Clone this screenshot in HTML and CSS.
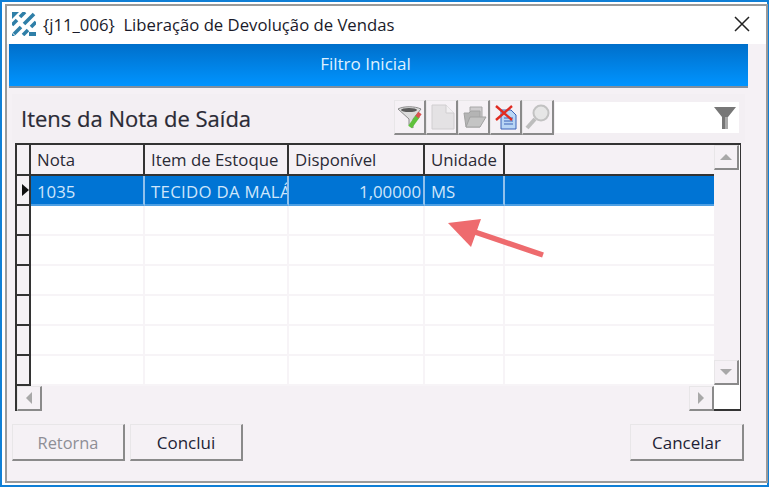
FILE: index.html
```html
<!doctype html>
<html lang="pt">
    <head>
        <meta charset="UTF-8" />
        <title>Liberação de Devolução de Vendas</title>
        <link rel="stylesheet" href="styles.css">
    </head>
    <body>
        <div class="screen">
            <div class="window">
                <div class="titlebar">
                    <svg class="app-logo" width="24" height="24" viewBox="0 0 24 24">
                        <path d="M0 0H7L0 7Z" fill="#2f7fa8" />
                        <path d="M0 13 5 8M8 5 13 0M2 22 9 15M12 12 22 2M11 23 16 18M19 15 24 10" stroke="#2f7fa8" stroke-width="3.600" fill="none" />
                        <path d="M17 24V20H24V24ZM0 24V21L3 24Z" fill="#2f7fa8" />
                    </svg>
                    <span class="titlebar__text">{j11_006}&nbsp; Liberação de Devolução de Vendas</span>
                    <svg class="close-icon" width="16" height="16" viewBox="0 0 16 16">
                        <path d="M1 1 15 15M15 1 1 15" stroke="#222" stroke-width="1.5" fill="none" />
                    </svg>
                </div>
                <div class="content">
                    <div class="band">Filtro Inicial</div>
                    <div class="panel">
                        <div class="panel__head">
                            <h1 class="panel__title">Itens da Nota de Saída</h1>
                            <div class="toolbar">
                                <button class="tool">
                                    <svg width="26" height="26" viewBox="0 0 26 26">
                                        <path d="M1 5C6 2 18 2 24 5L16 15V24L12 21V15Z" fill="#dcdcdc" stroke="#8a8a8a" />
                                        <ellipse cx="12" cy="6" rx="8" ry="2" fill="#5a5a5a" />
                                        <path d="M13 23 21 12" stroke="#5fc13c" stroke-width="4.500" />
                                        <path d="M20 13 23 9" stroke="#d9534f" stroke-width="4" />
                                    </svg>
                                </button>
                                <button class="tool">
                                    <svg width="26" height="26" viewBox="0 0 26 26">
                                        <path d="M3 1H17L25 9V25H3Z" fill="#e4e2e4" stroke="#d0ced0" />
                                        <path d="M17 1V9H25" fill="#f2f0f2" stroke="#d0ced0" />
                                    </svg>
                                </button>
                                <button class="tool">
                                    <svg width="26" height="26" viewBox="0 0 26 26">
                                        <path d="M9 3H21V14H9Z" fill="#cfcdcf" stroke="#a8a8a8" />
                                        <path d="M3 9H8L10 7H19V23H5Z" fill="#b4b4b4" stroke="#a2a2a2" />
                                        <path d="M5 23 9 13H25L19 23Z" fill="#c4c4c4" stroke="#a2a2a2" />
                                    </svg>
                                </button>
                                <button class="tool">
                                    <svg width="26" height="26" viewBox="0 0 26 26">
                                        <path d="M8 6H18L23 11V25H8Z" fill="#b9d6f5" stroke="#3a62b8" />
                                        <path d="M11 14H20M11 17H20M11 20H20" stroke="#3a62b8" />
                                        <path d="M3 2 19 16M19 2 3 16" stroke="#e02a20" stroke-width="2.400" />
                                    </svg>
                                </button>
                                <button class="tool">
                                    <svg width="26" height="26" viewBox="0 0 26 26">
                                        <circle cx="16" cy="9" r="7.500" fill="#e6e6e6" stroke="#c2c2c2" stroke-width="2" />
                                        <path d="M10 15 2 24" stroke="#bdbdbd" stroke-width="4" />
                                    </svg>
                                </button>
                            </div>
                            <div class="filter-box">
                                <svg width="24" height="24" viewBox="0 0 24 24">
                                    <path d="M1 1H23L15 11V23H9V11Z" fill="#777" />
                                    <path d="M12 11H15V23H12Z" fill="#aaa" />
                                </svg>
                            </div>
                        </div>
                        <div class="grid">
                            <div class="grid__main">
                                <div class="grid__row grid__row--head">
                                    <div class="cell cell--mark"></div>
                                    <div class="cell cell--nota">Nota</div>
                                    <div class="cell cell--item">Item de Estoque</div>
                                    <div class="cell cell--disp">Disponível</div>
                                    <div class="cell cell--unid">Unidade</div>
                                    <div class="cell cell--rest"></div>
                                </div>
                                <div class="grid__row grid__row--selected">
                                    <div class="cell cell--mark"><span class="row-pointer"></span></div>
                                    <div class="cell cell--nota">1035</div>
                                    <div class="cell cell--item">TECIDO DA MALÁ</div>
                                    <div class="cell cell--disp cell--right">1,00000</div>
                                    <div class="cell cell--unid">MS</div>
                                    <div class="cell cell--rest"></div>
                                </div>
                                <div class="grid__row"><div class="cell cell--mark"></div><div class="cell cell--nota"></div><div class="cell cell--item"></div><div class="cell cell--disp"></div><div class="cell cell--unid"></div><div class="cell cell--rest"></div></div>
                                <div class="grid__row"><div class="cell cell--mark"></div><div class="cell cell--nota"></div><div class="cell cell--item"></div><div class="cell cell--disp"></div><div class="cell cell--unid"></div><div class="cell cell--rest"></div></div>
                                <div class="grid__row"><div class="cell cell--mark"></div><div class="cell cell--nota"></div><div class="cell cell--item"></div><div class="cell cell--disp"></div><div class="cell cell--unid"></div><div class="cell cell--rest"></div></div>
                                <div class="grid__row"><div class="cell cell--mark"></div><div class="cell cell--nota"></div><div class="cell cell--item"></div><div class="cell cell--disp"></div><div class="cell cell--unid"></div><div class="cell cell--rest"></div></div>
                                <div class="grid__row"><div class="cell cell--mark"></div><div class="cell cell--nota"></div><div class="cell cell--item"></div><div class="cell cell--disp"></div><div class="cell cell--unid"></div><div class="cell cell--rest"></div></div>
                                <div class="grid__row"><div class="cell cell--mark"></div><div class="cell cell--nota"></div><div class="cell cell--item"></div><div class="cell cell--disp"></div><div class="cell cell--unid"></div><div class="cell cell--rest"></div></div>
                                <div class="hscroll">
                                    <div class="scroll-btn"><span class="tri tri--left"></span></div>
                                    <div class="scroll-track"></div>
                                    <div class="scroll-btn"><span class="tri tri--right"></span></div>
                                </div>
                            </div>
                            <div class="vscroll">
                                <div class="scroll-btn"><span class="tri tri--up"></span></div>
                                <div class="scroll-track"></div>
                                <div class="scroll-btn"><span class="tri tri--down"></span></div>
                                <div class="scroll-corner"></div>
                            </div>
                        </div>
                        <div class="actions">
                            <button class="btn btn--disabled">Retorna</button>
                            <button class="btn">Conclui</button>
                            <button class="btn btn--end">Cancelar</button>
                        </div>
                    </div>
                </div>
            </div>
            <svg class="callout-arrow" width="100" height="40" viewBox="0 0 100 40">
                <path d="M95 36 24 12" stroke="#ee6b6e" stroke-width="5.500" fill="none" />
                <path d="M0 4 33 0 23 28Z" fill="#ee6b6e" />
            </svg>
        </div>
    </body>
</html>
```

FILE: styles.css
```css
* {
    padding: 0;
    margin: 0;
    box-sizing: border-box;
}

body {
    font-family: "Open Sans", "Noto Sans", sans-serif;
    background-color: #ffffff;
    width: 769px;
    height: 487px;
    overflow: hidden;
}

.screen {
    position: relative;
    width: 769px;
    height: 487px;
    border: 2px solid #0f7fd6;
    padding: 2px 0 2px 3px;
}

.window {
    height: 100%;
    width: 763px;
    border: 2px solid #9a9a9a;
    background: #f5f1f5;
    display: flex;
    flex-direction: column;
}

.titlebar {
    height: 38px;
    flex: none;
    background: #ffffff;
    display: flex;
    align-items: center;
    padding: 0 16px 2px 5px;
    gap: 7px;
}

.app-logo {
    flex: none;
}

.titlebar__text {
    flex: 1;
    font-size: 16.7px;
    color: #1a1a2a;
}

.content {
    flex: 1;
    display: flex;
    flex-direction: column;
    padding-left: 2px;
}

.band {
    width: 739px;
    height: 44px;
    flex: none;
    padding: 0 26px 4px 0;
    background: linear-gradient(#006fca, #0094ff);
    border-bottom: 2px solid #7f8f9f;
    color: #dff0ff;
    font-size: 17px;
    display: flex;
    align-items: center;
    justify-content: center;
}

.panel {
    flex: 1;
    padding: 6px 0 0 3px;
    display: flex;
    flex-direction: column;
}

.panel__head {
    width: 733px;
    height: 49px;
    flex: none;
    display: flex;
    align-items: center;
    background: #f3eff3;
    padding-bottom: 2px;
}

.panel__title {
    width: 382px;
    padding-left: 9px;
    font-size: 22px;
    font-weight: 400;
    color: #2a2a35;
    -webkit-text-stroke: 0.2px #2a2a35;
}

.toolbar {
    display: flex;
}

.tool {
    width: 32px;
    height: 35px;
    background: #f5f1f5;
    border: 1px solid #e8e6e8;
    border-right: 2px solid #8a8a8a;
    border-bottom: 2px solid #8a8a8a;
    display: flex;
    align-items: center;
    justify-content: center;
}

.filter-box {
    width: 184px;
    height: 31px;
    margin-left: 1px;
    background: #ffffff;
    display: flex;
    align-items: center;
    justify-content: flex-end;
    padding-right: 2px;
}

.grid {
    width: 726px;
    height: 268px;
    flex: none;
    margin: 0 0 0 3px;
    background: #ffffff;
    border: solid #333333;
    border-width: 2px 1px 2px 2px;
    display: flex;
}

.grid__main {
    flex: 1;
    min-width: 0;
    display: flex;
    flex-direction: column;
}

.grid__row {
    height: 30px;
    flex: none;
    display: flex;
    color: #2a2a35;
    font-size: 16.8px;
}

.grid__row--head {
    height: 31px;
    background: #f5f1f5;
}

.grid__row--selected {
    background: #0074d4;
    color: #cfe6fb;
}

.cell {
    height: 100%;
    padding: 0 6px;
    display: flex;
    align-items: center;
    white-space: nowrap;
    overflow: hidden;
    border-right: 2px solid #f7f4f7;
    border-bottom: 2px solid #f7f4f7;
}

.grid__row--selected .cell {
    padding-top: 2px;
    border-right-color: #8fc0ec;
    border-bottom-color: #4d9fe3;
}

.grid__row--selected .cell--item {
    letter-spacing: 0.3px;
}

.grid__row--head .cell {
    border-right-color: #333333;
    border-bottom-color: #333333;
}

.cell--mark,
.grid__row--selected .cell--mark {
    width: 14px;
    padding: 0;
    background: #f5f1f5;
    border-right: 2px solid #333333;
    border-bottom: 2px solid #333333;
    justify-content: flex-end;
}

.cell--nota {
    width: 114px;
}

.cell--item {
    width: 144px;
}

.cell--disp {
    width: 136px;
}

.cell--unid {
    width: 80px;
}

.cell--rest {
    flex: 1;
    border-right: 0;
}

.cell--right {
    justify-content: flex-end;
    padding-right: 2px;
}

.row-pointer {
    width: 0;
    height: 0;
    border-left: 7px solid #111111;
    border-top: 6px solid transparent;
    border-bottom: 6px solid transparent;
}

.hscroll {
    flex: 1;
    display: flex;
}

.vscroll {
    width: 26px;
    flex: none;
    display: flex;
    flex-direction: column;
}

.scroll-btn {
    width: 25px;
    height: 25px;
    flex: none;
    background: #f5f1f5;
    border: 1px solid #e8e6e8;
    border-right: 2px solid #8a8a8a;
    border-bottom: 2px solid #8a8a8a;
    display: flex;
    align-items: center;
    justify-content: center;
}

.scroll-track {
    flex: 1;
    background-color: #f5f1f5;
    background-image: radial-gradient(#ffffff 0.5px, transparent 0.6px);
    background-size: 2px 2px;
}

.scroll-corner {
    height: 24px;
    flex: none;
    background: #ffffff;
}

.tri {
    width: 0;
    height: 0;
    border: 5px solid transparent;
}

.tri--up {
    border-top: 0;
    border-left-width: 6px;
    border-right-width: 6px;
    border-bottom: 6px solid #a8a8a8;
}

.tri--down {
    border-bottom: 0;
    border-left-width: 6px;
    border-right-width: 6px;
    border-top: 6px solid #a8a8a8;
}

.tri--left {
    border-left: 0;
    border-top-width: 6px;
    border-bottom-width: 6px;
    border-right: 6px solid #a8a8a8;
}

.tri--right {
    border-right: 0;
    border-top-width: 6px;
    border-bottom-width: 6px;
    border-left: 6px solid #a8a8a8;
}

.actions {
    display: flex;
    gap: 5px;
    margin-top: 13px;
}

.btn {
    width: 113px;
    height: 37px;
    font-family: inherit;
    font-size: 17px;
    color: #1f1f35;
    background: #f5f1f5;
    border: 1px solid #e8e6e8;
    border-right: 2px solid #8a8a8a;
    border-bottom: 2px solid #8a8a8a;
}

.btn--disabled {
    color: #8e8e96;
    font-size: 16.4px;
}

.btn--end {
    margin-left: auto;
    margin-right: 22px;
    width: 114px;
}

.callout-arrow {
    position: absolute;
    left: 446px;
    top: 217px;
}
```
